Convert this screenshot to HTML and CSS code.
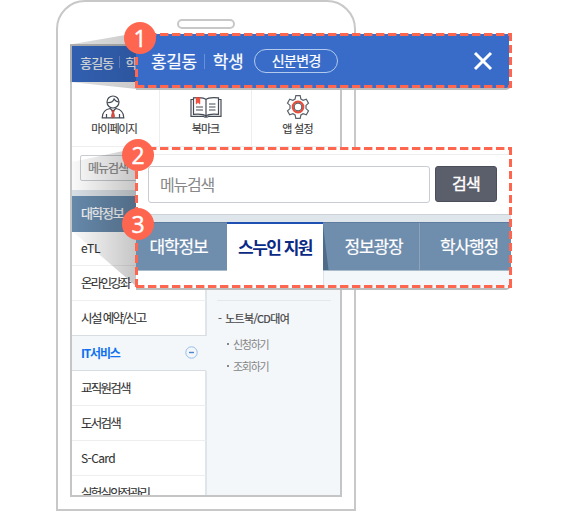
FILE: index.html
```html
<!DOCTYPE html>
<html lang="ko">
<head>
<meta charset="utf-8">
<title>메뉴 안내</title>
<link rel="stylesheet" href="styles.css">
</head>
<body>
<main class="stage">
  <section class="phone">
    <div class="speaker"></div>
    <div class="screen">
      <header class="bar"><span>홍길동</span><i></i><span>학생</span></header>
      <nav class="quick">
        <a><svg width="24" height="24" viewBox="0 0 24 24" fill="none" stroke="#454b55" stroke-width="1.2"><circle cx="12" cy="7" r="6"/><path d="M6.300 7.500c4 .5 6-1.500 6.800-3.500 1 2 2.500 2.800 4.600 2.800M1.200 22.800c0-6 3-8.300 7.800-9.300l3 2.500 3-2.500c4.800 1 7.800 3.300 7.800 9.300zM5.500 19v3.500M18.500 19v3.500"/><path d="M10.600 15.500h2.800l-.7 2 1 4-1.700 1.500-1.700-1.500 1-4z" fill="#e84c3d" stroke="#8f3830" stroke-width=".6"/></svg><span>마이페이지</span></a>
        <a><svg width="32" height="24" viewBox="0 0 32 24" fill="none" stroke="#454b55" stroke-width="1.200"><path d="M16 4.500C14 2.300 9 2.300 3.500 2.800v16.500c5.500-.5 10.500-.3 12.500 1.900 2-2.200 7-2.400 12.500-1.900V2.800C23 2.300 18 2.300 16 4.500zM16 4.500v16.500M3.500 4.500H1v16.800h12.500c1 1.200 4 1.200 5 0H31V4.500h-2.500M19 9h6.500M19 12h6.500M19 15h6.500M6 12h7M6 15h7"/><path d="M6 2.500h4v6.700l-2-1.700-2 1.700z" fill="#f05242" stroke="#e84c3d" stroke-width=".4"/></svg><span>북마크</span></a>
        <a><svg width="24" height="24" viewBox="0 0 24 24" fill="none" stroke="#59616b" stroke-width="1.200"><path d="M9.800.7h4.400l.7 3.300 2.200 1.300 3.200-1 2.200 3.800L20 10.400v3.200l2.500 2.300-2.200 3.800-3.200-1-2.200 1.300-.7 3.300H9.800L9.100 20l-2.200-1.300-3.200 1-2.200-3.800L4 13.600v-3.200L1.500 8.100l2.200-3.800 3.200 1L9.100 4z"/><circle cx="12" cy="12" r="5.300" stroke="#ee4c3b" stroke-width="2.200"/><circle cx="12" cy="12" r="3.800"/></svg><span>앱 설정</span></a>
      </nav>
      <div class="find"><div class="field">메뉴검색</div></div>
      <div class="tabstrip">대학정보</div>
      <div class="content">
        <ul class="list">
          <li>eTL</li><li>온라인강좌</li><li>시설 예약/신고</li>
          <li class="on"><span>IT서비스</span><svg width="13" height="13" viewBox="0 0 13 13" fill="none"><circle cx="6.500" cy="6.500" r="5.700" stroke="#96bce8"/><path d="M4 6.500h5" stroke="#4c86cf" stroke-width="1.400"/></svg></li>
          <li>교직원검색</li><li>도서검색</li><li>S-Card</li><li class="last">실험실안전관리</li>
        </ul>
        <div class="sub">
          <div class="group"><b>-</b><span>노트북/CD대여</span></div>
          <div class="leaf"><i></i><span>신청하기</span></div>
          <div class="leaf"><i></i><span>조회하기</span></div>
        </div>
      </div>
    </div>
  </section>

  <svg class="rays" width="580" height="511">
    <defs><linearGradient id="ray" gradientUnits="userSpaceOnUse" x1="70" y1="0" x2="138" y2="0"><stop offset="0" stop-opacity=".12"/><stop offset="1" stop-opacity=".21"/></linearGradient>
    <linearGradient id="ray2" gradientUnits="userSpaceOnUse" x1="72" y1="0" x2="138" y2="0"><stop offset="0" stop-opacity=".02"/><stop offset="1" stop-opacity=".23"/></linearGradient></defs>
    <path d="M70 44.500 137 33V89L70 82z" fill="url(#ray)"/>
    <path d="M72 162 137 148V287L72 231z" fill="url(#ray2)"/>
  </svg>

  <section class="callout top">
    <span class="name">홍길동</span><i></i><span class="role">학생</span><span class="pill">신분변경</span>
    <svg class="close" width="20" height="20" viewBox="0 0 20 20"><path d="M2 2 18 18M18 2 2 18" stroke="#fff" stroke-width="3"/></svg>
  </section>
  <section class="callout menu">
    <div class="search"><div class="input">메뉴검색</div><div class="button">검색</div></div>
    <div class="band"></div>
    <div class="tabs"><div>대학정보</div><div class="active">스누인 지원</div><div class="after">정보광장</div><div class="end">학사행정</div></div>
    <div class="below"></div>
  </section>

  <svg class="dashes" width="580" height="511" fill="none" stroke="#ff6650" stroke-width="3">
    <path d="M510.500 33V88" stroke="#fff"/>
    <path d="M135 34.500H512M135 86.500H512" stroke-dasharray="8.400 3.600" stroke-dashoffset="-1"/>
    <path d="M136.500 33V88M510.500 33V88" stroke-dasharray="8 4"/>
    <path d="M135 148.500H512M135 286.500H512" stroke-dasharray="8.400 3.600" stroke-dashoffset="-1"/>
    <path d="M136.500 147V288M510.500 147V288" stroke-dasharray="8 4"/>
  </svg>
  <div class="badge one">1</div><div class="badge two">2</div><div class="badge three">3</div>
</main>
</body>
</html>
```
FILE: styles.css
```css
* { box-sizing: border-box; }
body { margin: 0; background: #fff; font-family: "Noto Sans CJK KR", sans-serif; color: #333; }
ul { margin: 0; padding: 0; list-style: none; }
.stage { position: relative; width: 580px; height: 511px; overflow: hidden; white-space: nowrap; -webkit-text-stroke: .2px currentColor; }

.phone { width: 300px; height: 511px; margin-left: 56px; border: 2px solid #c8c8c8; border-radius: 29px 29px 0 0; padding: 17px 12px 0; }
.speaker { width: 58px; height: 10px; margin: 0 auto 15px; border: 2px solid #c8c8c8; border-radius: 5px; }
.screen { width: 272px; height: 453px; border: 2px solid #c5c5c5; overflow: hidden; }
.bar { display: flex; align-items: center; height: 36px; padding: 0 0 4px 8px; background: #386cc8; color: #fff; font-size: 13px; letter-spacing: -.8px; }
.bar i { width: 1px; height: 12px; margin: 0 5px 0 6px; background: #6d92d4; }
.quick { display: flex; height: 65px; border-bottom: 1px solid #eee; }
.quick a { display: flex; flex-direction: column; align-items: center; flex-shrink: 0; width: 92px; padding-top: 13px; border-right: 1px solid #eee; }
.quick a:first-child { width: 88px; padding-right: 6px; }
.quick a:last-child { width: 91px; border: 0; }
.quick span { margin-top: 1px; font-size: 11px; line-height: 16px; letter-spacing: -1px; -webkit-text-stroke: .1px currentColor; }
.quick a:first-child span { margin-left: 3px; }
.quick a:last-child span { letter-spacing: -.7px; }
.find { height: 43px; padding: 8px; }
.field { width: 190px; height: 26px; padding-left: 7px; border: 1px solid #c8cbd0; border-radius: 2px; color: #888; font-size: 12px; line-height: 23px; letter-spacing: -1px; }
.tabstrip { height: 42px; padding-left: 9px; border-top: 6px solid #dde4e9; background: #688bad; color: #fff; font-size: 13px; line-height: 34px; letter-spacing: -1.400px; }
.content { display: flex; height: 264px; background: #f3f7fa; }
.list { width: 135px; }
.list li { display: flex; align-items: center; justify-content: space-between; height: 35px; padding: 0 8px 1px 9px; background: #fff; border-right: 2px solid #e0e5e9; border-bottom: 1px solid #eee; font-size: 12.500px; letter-spacing: -1.750px; -webkit-text-stroke: .1px currentColor; }
.list li:first-child { letter-spacing: -.2px; font-size: 12px; height: 34px; padding-bottom: 3px; }
.list li:nth-child(3) { border-bottom-color: #d8dde2; letter-spacing: -1.600px; }
.list .on { background: #f3f7fa; color: #0c70f0; border-right-color: #f3f7fa; border-bottom-color: #d8dde2; font-size: 12px; font-weight: 700; letter-spacing: -1.200px; padding-right: 7px; -webkit-text-stroke: 0; }
.list li:nth-child(7) { font-size: 12px; letter-spacing: -.6px; }
.sub { flex: 1; margin: 68px 9px 0 10px; padding-top: 9px; border-top: 1px solid #e3e8eb; }
.group { display: flex; gap: 4px; height: 18px; margin-left: 1px; font-size: 11px; line-height: 17px; letter-spacing: -.7px; color: #444; }
.group b { font-weight: 400; }
.leaf { display: flex; align-items: center; gap: 4px; height: 22px; margin-left: 10px; font-size: 11px; letter-spacing: -1.300px; color: #858585; -webkit-text-stroke: 0; }
.group + .leaf { margin-top: 5px; }
.leaf i { width: 2px; height: 2px; background: #888; }

.rays, .dashes { position: absolute; left: 0; top: 0; }
.callout { position: absolute; left: 136px; width: 375px; background: #fff; }
.top { top: 34px; height: 54px; display: flex; align-items: center; padding: 0 18px 0 15px; background: #386cc8; color: #fff; font-size: 17px; box-shadow: 0 2px 0 #bcbcbc; border-radius: 0 0 5px 0; }
.top i { width: 1px; height: 15px; margin: 0 8px 0 7px; background: #6790d8; }
.name, .role { letter-spacing: -.4px; line-height: 24px; margin-top: -1px; }
.pill { width: 84px; height: 24px; margin-left: 11px; border: 1px solid #b3caef; border-radius: 12px; text-align: center; font-size: 14px; line-height: 21px; letter-spacing: -.6px; }
.close { margin-left: auto; }
.menu { top: 147px; height: 141px; box-shadow: 0 2px 0 #bcbcbc; border-radius: 0 0 5px 0; }
.search { display: flex; gap: 5px; height: 67px; padding: 19px 0 0 12px; background: linear-gradient(#eee, #eee) 0 7px / 100% 1px no-repeat; }
.input { width: 282px; height: 37px; padding-left: 11px; border: 1px solid #c9ccd2; border-radius: 3px; color: #888; font-size: 16px; line-height: 34px; letter-spacing: -1.200px; -webkit-text-stroke: 0; }
.button { width: 62px; height: 36px; border: 1px solid #4b4d5a; border-radius: 3px; background: #5b5e6b; color: #fff; text-align: center; font-size: 16px; line-height: 33px; letter-spacing: -.7px; -webkit-text-stroke: .4px currentColor; }
.band { height: 8px; border-top: 1px solid #ccd3d8; background: #dfe6eb; }
.tabs { display: flex; height: 49px; background: #6f8dad; border-top: 1px solid #5f7c9e; border-bottom: 1px solid #a9bac9; color: #fff; font-size: 17px; line-height: 46px; letter-spacing: -1.200px; text-align: center; }
.tabs div:first-child { width: 91px; padding-right: 6px; }
.tabs .active { width: 96px; height: 60px; margin-top: -1px; border-top: 2px solid #1e50b4; background: #fff; color: #0a2a86; font-weight: 700; line-height: 45px; letter-spacing: -1.500px; -webkit-text-stroke: 0; }
.tabs .after { width: 97px; padding-left: 5px; border-right: 1px solid #8ba4bd; background: linear-gradient(83deg, #4e6b88 5px, transparent 6px); }
.tabs .end { flex: 1; padding-left: 7px; }
.below { height: 17px; background: linear-gradient(90deg, #fff 187px, #dde3e8 187px 188px, #f3f7fa 188px); }

.badge { position: absolute; width: 32px; height: 32px; border-radius: 50%; background: #ff6650; color: #fff; text-align: center; font: 23px/32px "Open Sans", sans-serif; -webkit-text-stroke: .4px currentColor; }
.one { left: 124px; top: 22px; }
.two { left: 122px; top: 139px; }
.three { left: 122px; top: 208px; }
```
